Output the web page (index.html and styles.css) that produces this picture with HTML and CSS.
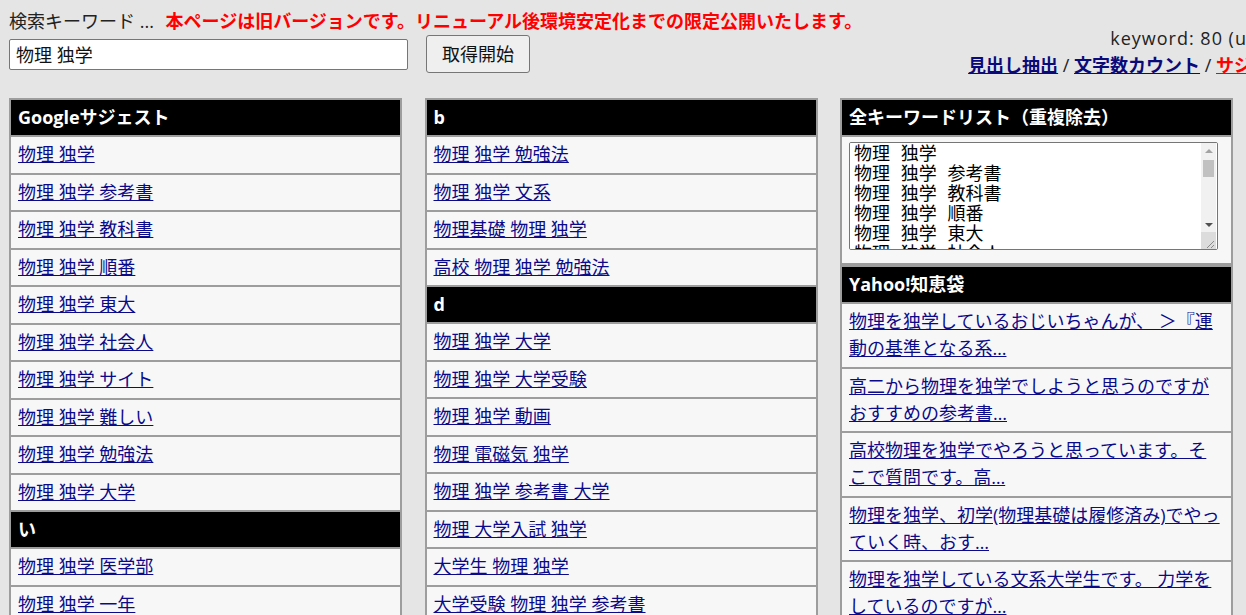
FILE: index.html
```html
<!DOCTYPE html>
<html lang="ja">
<head>
<meta charset="utf-8">
<title>キーワード取得</title>
<link rel="stylesheet" href="styles.css">
</head>
<body>
<div class="top">
  <div class="top-left">
    <div class="notice">検索キーワード ... <strong class="warn">本ページは旧バージョンです。リニューアル後環境安定化までの限定公開いたします。</strong></div>
    <form class="search">
      <input class="search-input" type="text" value="物理 独学">
      <button class="search-btn" type="button">取得開始</button>
    </form>
  </div>
  <div class="meta">
    <div class="meta-count">keyword: 80 (unique)</div>
    <div class="meta-links"><a href="#">見出し抽出</a> / <a href="#">文字数カウント</a> / <a href="#" class="hot">サジェスト</a></div>
  </div>
</div>

<div class="columns">
  <div class="col">
    <div class="box">
      <div class="head">Googleサジェスト</div>
      <div class="cell"><a href="#">物理 独学</a></div>
      <div class="cell"><a href="#">物理 独学 参考書</a></div>
      <div class="cell"><a href="#">物理 独学 教科書</a></div>
      <div class="cell"><a href="#">物理 独学 順番</a></div>
      <div class="cell"><a href="#">物理 独学 東大</a></div>
      <div class="cell"><a href="#">物理 独学 社会人</a></div>
      <div class="cell"><a href="#">物理 独学 サイト</a></div>
      <div class="cell"><a href="#">物理 独学 難しい</a></div>
      <div class="cell"><a href="#">物理 独学 勉強法</a></div>
      <div class="cell"><a href="#">物理 独学 大学</a></div>
      <div class="head">い</div>
      <div class="cell"><a href="#">物理 独学 医学部</a></div>
      <div class="cell"><a href="#">物理 独学 一年</a></div>
      <div class="cell"><a href="#">物理 独学 院試</a></div>
    </div>
  </div>
  <div class="col">
    <div class="box">
      <div class="head">b</div>
      <div class="cell"><a href="#">物理 独学 勉強法</a></div>
      <div class="cell"><a href="#">物理 独学 文系</a></div>
      <div class="cell"><a href="#">物理基礎 物理 独学</a></div>
      <div class="cell"><a href="#">高校 物理 独学 勉強法</a></div>
      <div class="head">d</div>
      <div class="cell"><a href="#">物理 独学 大学</a></div>
      <div class="cell"><a href="#">物理 独学 大学受験</a></div>
      <div class="cell"><a href="#">物理 独学 動画</a></div>
      <div class="cell"><a href="#">物理 電磁気 独学</a></div>
      <div class="cell"><a href="#">物理 独学 参考書 大学</a></div>
      <div class="cell"><a href="#">物理 大学入試 独学</a></div>
      <div class="cell"><a href="#">大学生 物理 独学</a></div>
      <div class="cell"><a href="#">大学受験 物理 独学 参考書</a></div>
    </div>
  </div>
  <div class="col">
    <div class="box">
      <div class="head">全キーワードリスト（重複除去）</div>
      <div class="cell cell-area">
        <div class="area-wrap">
          <textarea class="all-list">物理 独学
物理 独学 参考書
物理 独学 教科書
物理 独学 順番
物理 独学 東大
物理 独学 社会人
物理 独学 サイト
物理 独学 難しい
物理 独学 勉強法
物理 独学 大学
物理 独学 医学部
物理 独学 一年
物理 独学 院試
物理 独学 文系
物理基礎 物理 独学
高校 物理 独学 勉強法
物理 独学 大学受験
物理 独学 動画</textarea>
          <div class="sb" aria-hidden="true">
            <div class="sb-btn"><span class="tri-up"></span></div>
            <div class="sb-track"><div class="sb-thumb"></div></div>
            <div class="sb-btn"><span class="tri-down"></span></div>
            <div class="sb-corner">
              <svg width="15" height="17" viewBox="0 0 15 17"><path d="M13 9 L6 16 M13 13 L10 16" stroke="#8a8a8a" stroke-width="1" fill="none"/></svg>
            </div>
          </div>
        </div>
      </div>
    </div>
    <div class="box">
      <div class="head">Yahoo!知恵袋</div>
      <div class="cell"><a href="#">物理を独学しているおじいちゃんが、 ＞『運動の基準となる系…</a></div>
      <div class="cell"><a href="#">高二から物理を独学でしようと思うのですがおすすめの参考書…</a></div>
      <div class="cell"><a href="#">高校物理を独学でやろうと思っています。そこで質問です。高…</a></div>
      <div class="cell"><a href="#">物理を独学、初学(物理基礎は履修済み)でやっていく時、おす…</a></div>
      <div class="cell"><a href="#">物理を独学している文系大学生です。 力学をしているのですが…</a></div>
    </div>
  </div>
</div>
</body>
</html>
```

FILE: styles.css
```css
html, body {
  overflow: hidden;
}
body {
  margin: 0;
  padding: 8px 0 0 9px;
  background: #e5e5e5;
  color: #222;
  font-family: "Open Sans", "Noto Sans CJK JP", sans-serif;
  font-size: 18px;
  line-height: 27px;
}
a {
  color: #0a0a8a;
}

.top {
  display: flex;
  height: 65px;
  margin-right: -60px;
}
.top-left {
  flex: none;
}
.notice {
  height: 27px;
  white-space: nowrap;
}
.warn {
  margin-left: 7px;
  color: #f00;
}
.search {
  display: flex;
  align-items: center;
  gap: 18px;
  margin: 0;
  height: 38px;
}
.search-input {
  box-sizing: border-box;
  width: 399px;
  height: 31px;
  margin: 0;
  padding: 0 6px;
  border: 1px solid #767676;
  border-radius: 2px;
  background: #fff;
  font: inherit;
  color: #111;
}
.search-btn {
  box-sizing: border-box;
  width: 104px;
  height: 38px;
  margin: 0;
  padding: 0;
  border: 1px solid #767676;
  border-radius: 3px;
  background: #efefef;
  font: inherit;
  color: #111;
}
.meta {
  margin-left: auto;
  margin-top: 16.5px;
  text-align: right;
  white-space: nowrap;
}
.meta-count {
  letter-spacing: 1px;
}
.meta-links a {
  font-weight: bold;
  color: #0a0a7a;
}
.meta-links a.hot {
  color: #f00;
}

.columns {
  display: flex;
  align-items: flex-start;
  gap: 22.5px;
  margin-top: 25px;
}
.col {
  flex: none;
  width: 393px;
  display: flex;
  flex-direction: column;
}
.box {
  display: flex;
  flex-direction: column;
  gap: 2px;
  padding: 2px;
  background: #9d9d9d;
}
.head {
  padding: 4px 7px;
  background: #000;
  color: #fff;
  font-weight: bold;
}
.cell {
  padding: 4.25px 7px;
  background: #f7f7f7;
}
.cell-area {
  padding: 5px 7px 0;
  height: 121px;
}
.area-wrap {
  position: relative;
  width: 369px;
  height: 108px;
}
.all-list {
  box-sizing: border-box;
  display: block;
  width: 369px;
  height: 108px;
  margin: 0;
  padding: 2px 4px;
  border: 1px solid #767676;
  border-radius: 2px;
  background: #fff;
  color: #000;
  font-family: "Liberation Mono", "Noto Sans CJK JP", monospace;
  font-size: 18px;
  line-height: 20px;
  resize: none;
}
.sb {
  position: absolute;
  top: 1px;
  right: 2px;
  bottom: 1px;
  width: 15px;
  display: flex;
  flex-direction: column;
  background: #f1f1f1;
}
.sb-btn {
  height: 15px;
  display: flex;
  align-items: center;
  justify-content: center;
}
.tri-up {
  width: 0;
  height: 0;
  border-left: 4px solid transparent;
  border-right: 4px solid transparent;
  border-bottom: 4px solid #a3a3a3;
}
.tri-down {
  width: 0;
  height: 0;
  border-left: 4px solid transparent;
  border-right: 4px solid transparent;
  border-top: 4px solid #505050;
}
.sb-track {
  flex: 1;
  padding: 2px 2px 0;
}
.sb-thumb {
  height: 17px;
  background: #c1c1c1;
}
.sb-corner {
  height: 17px;
  background: #dcdcdc;
  line-height: 0;
}
```
